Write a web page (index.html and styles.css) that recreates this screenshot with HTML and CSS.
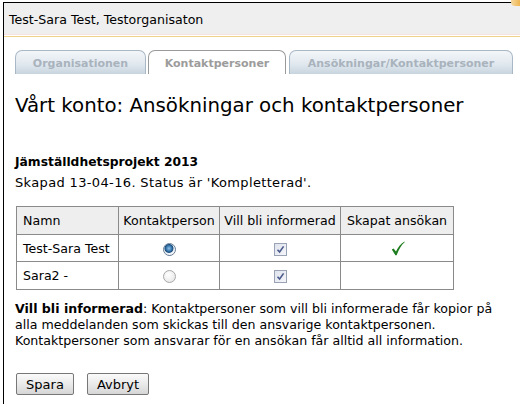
FILE: index.html
```html
<!DOCTYPE html>
<html lang="sv">
<head>
<meta charset="utf-8">
<title>Vårt konto</title>
<link rel="stylesheet" href="styles.css">
</head>
<body>
<div class="frame">
  <div class="corner"></div>
  <div class="topbar">Test-Sara Test, Testorganisaton</div>
  <div class="topline"></div>
  <div class="content">
    <ul class="tabs">
      <li class="tab t1">Organisationen</li>
      <li class="tab t2 active">Kontaktpersoner</li>
      <li class="tab t3">Ansökningar/Kontaktpersoner</li>
    </ul>
    <h1 class="title">Vårt konto: Ansökningar och kontaktpersoner</h1>
    <h2 class="project">Jämställdhetsprojekt 2013</h2>
    <p class="status">Skapad 13-04-16. Status är 'Kompletterad'.</p>
    <table class="grid">
      <colgroup><col class="c1"><col class="c2"><col class="c3"><col class="c4"></colgroup>
      <thead>
        <tr><th class="left">Namn</th><th>Kontaktperson</th><th>Vill bli informerad</th><th>Skapat ansökan</th></tr>
      </thead>
      <tbody>
        <tr class="r1">
          <td class="left">Test-Sara Test</td>
          <td><span class="radio on"></span></td>
          <td><span class="check"><svg width="9" height="9" viewBox="0 0 9 9"><path d="M1.5 4.8 L3.6 7 L7.6 1.4" fill="none" stroke="#4a5a8c" stroke-width="1.6"/></svg></span></td>
          <td class="done"><svg class="tick" width="14" height="15" viewBox="0 0 14 15"><path d="M0.8 8.6 L2.6 7.4 L5 10.6 C7 6.4 9.6 3 13.4 0.6 L13.6 1.2 C10.4 4 8 8 5.6 14.2 L4.4 14.2 Z" fill="#1e7d1e"/></svg></td>
        </tr>
        <tr class="r2">
          <td class="left">Sara2 -</td>
          <td><span class="radio"></span></td>
          <td><span class="check"><svg width="9" height="9" viewBox="0 0 9 9"><path d="M1.5 4.8 L3.6 7 L7.6 1.4" fill="none" stroke="#4a5a8c" stroke-width="1.6"/></svg></span></td>
          <td></td>
        </tr>
      </tbody>
    </table>
    <p class="info"><b>Vill bli informerad</b>: Kontaktpersoner som vill bli informerade får kopior på alla meddelanden som skickas till den ansvarige kontaktpersonen. Kontaktpersoner som ansvarar för en ansökan får alltid all information.</p>
    <div class="buttons">
      <button class="btn save">Spara</button>
      <button class="btn cancel">Avbryt</button>
    </div>
  </div>
</div>
</body>
</html>
```
FILE: styles.css
```css
html, body {
  margin: 0;
  padding: 0;
  background: #fff;
}
body {
  font-family: "DejaVu Sans", Verdana, sans-serif;
  color: #000;
  overflow: hidden;
  height: 404px;
}
.frame {
  margin: 2px 0 0 3px;
  border-top: 1px solid #000;
  border-left: 1px solid #000;
  height: 402px;
  box-sizing: border-box;
  position: relative;
}
.corner {
  position: absolute;
  right: 0;
  top: -3px;
  width: 9px;
  height: 6px;
  background: linear-gradient(90deg, #f5d9a0, #f0b650);
  border-radius: 0 0 0 4px;
}
.topbar {
  height: 31px;
  background: #efefef;
  font-size: 12.6px;
  line-height: 33px;
  padding-left: 5px;
  border-bottom: 1px solid #f6e2e2;
}
.topline {
  height: 1px;
  margin-top: 1px;
  background: #efd48e;
}
.content {
  padding: 13px 0 0 11px;
}
.tabs {
  list-style: none;
  margin: 0;
  padding: 0;
  display: flex;
  gap: 2px;
  height: 24px;
}
.tab {
  box-sizing: border-box;
  height: 24px;
  border: 1px solid #aab8c6;
  border-bottom: none;
  border-radius: 7px 7px 0 0;
  background: linear-gradient(#f3f6f9, #dfe7ee 60%, #c8d4de);
  font-size: 11px;
  font-weight: bold;
  color: #a9b3bd;
  text-align: center;
  line-height: 25px;
}
.t1 { width: 131px; }
.t2 { width: 138px; }
.t3 { width: 224px; margin-left: 1px; }
.tab.active {
  background: #fff;
  border-color: #9a9a9a;
  color: #9c9c9c;
}
.title {
  font-size: 19.8px;
  font-weight: normal;
  margin: 20px 0 0 0;
  line-height: 24px;
}
.project {
  font-size: 12.3px;
  font-weight: bold;
  margin: 36px 0 0 0;
  line-height: 16px;
}
.status {
  font-size: 13px;
  letter-spacing: 0.35px;
  margin: 5px 0 0 0;
  line-height: 16px;
}
.grid {
  border-collapse: collapse;
  table-layout: fixed;
  width: 437px;
  margin-top: 15px;
  margin-left: 1px;
  font-size: 12.6px;
}
.c1 { width: 102px; }
.c2 { width: 101px; }
.c3 { width: 121px; }
.c4 { width: 113px; }
.grid th, .grid td {
  border: 1px solid #8a8a8a;
  padding: 0 0 0 6px;
  text-align: center;
  font-weight: normal;
  white-space: nowrap;
  overflow: hidden;
}
.grid th:not(.left), .grid td:not(.left) { padding: 0; }
.grid th {
  background: #eeeeee;
  height: 27px;
}
.grid .r1 td { height: 26px; }
.grid .r2 td { height: 27px; }
.grid .left { text-align: left; }
.radio {
  display: inline-block;
  width: 11px;
  height: 11px;
  border-radius: 50%;
  border: 1px solid #a8a8a8;
  background: radial-gradient(circle at 40% 35%, #fff, #e2e2e2);
  vertical-align: middle;
}
.radio.on {
  border-color: #6c7f96;
  background: radial-gradient(circle at 45% 40%, #8fc0e8 0, #2c6da4 35%, #1d4d7a 45%, #e7eef6 55%, #ffffff 80%);
}
.check {
  display: inline-block;
  width: 11px;
  height: 11px;
  border: 1px solid #9aa3b5;
  background: linear-gradient(135deg, #dfe3ec, #f5f6fa);
  vertical-align: middle;
  position: relative;
}
.check svg {
  position: absolute;
  left: 1px;
  top: 1px;
}
.done { line-height: 0; }
.tick {
  vertical-align: middle;
  margin-left: 2px;
}
.info {
  font-size: 12.6px;
  line-height: 16px;
  margin: 11px 0 0 0;
  width: 492px;
}
.buttons {
  margin-top: 24px;
  display: flex;
  gap: 13px;
  margin-left: 1px;
}
.btn {
  font-family: "DejaVu Sans", Verdana, sans-serif;
  font-size: 13px;
  height: 22px;
  border: 1px solid #777;
  border-radius: 2px;
  background: linear-gradient(#fafafa, #eaeaea 50%, #d6d6d6);
  padding: 0;
  color: #000;
}
.save { width: 58px; }
.cancel { width: 62px; }
```
